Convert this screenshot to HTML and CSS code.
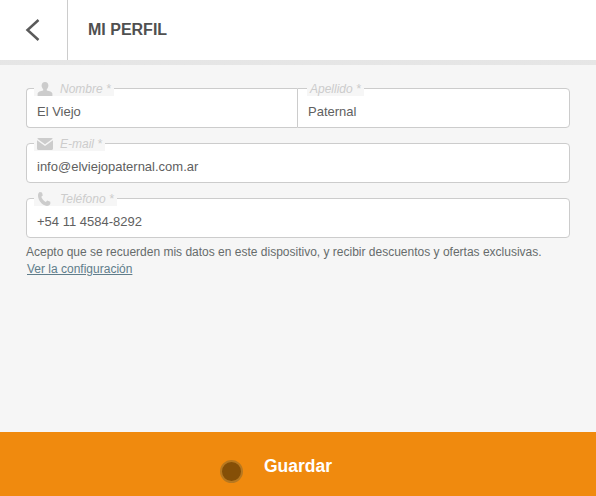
FILE: index.html
```html
<!DOCTYPE html>
<html lang="es">
<head>
<meta charset="utf-8">
<title>Mi perfil</title>
<link rel="stylesheet" href="styles.css">
</head>
<body>
<div class="app">
  <header class="topbar">
    <button class="back" aria-label="Volver">
      <svg width="16" height="22" viewBox="0 0 16 22"><path d="M13.500 1 2.500 11l11 10" fill="none" stroke="#5a5a5a" stroke-width="2.500"/></svg>
    </button>
    <h1 class="title">MI PERFIL</h1>
  </header>
  <main class="content">
    <div class="field-row">
      <div class="field field-first">
        <div class="label label-icon">
          <svg class="icon" width="16" height="14" viewBox="0 0 16 14"><path fill="#ccc" d="M8 0c2.200 0 3.400 1.600 3.400 3.600 0 1.500-.7 2.900-1.600 3.700v1.200c2.600.6 5.400 1.400 5.600 3V14H.6v-2.500c.2-1.600 3-2.400 5.600-3V7.300C5.300 6.500 4.600 5.100 4.600 3.600 4.600 1.600 5.800 0 8 0z"/></svg>
          <span>Nombre *</span>
        </div>
        <div class="value">El Viejo</div>
      </div>
      <div class="field field-last">
        <div class="label"><span>Apellido *</span></div>
        <div class="value">Paternal</div>
      </div>
    </div>
    <div class="field">
      <div class="label label-icon">
        <svg class="icon" width="16" height="12" viewBox="0 0 16 12"><path fill="#ccc" d="M1.500 0h13c.6 0 1 .3 1.200.7L8 6.300.3.700C.5.300.9 0 1.500 0zM0 2.300l8 5.800 8-5.800V10.500c0 .9-.6 1.500-1.500 1.500h-13C.6 12 0 11.400 0 10.500z"/></svg>
        <span>E-mail *</span>
      </div>
      <div class="value">info@elviejopaternal.com.ar</div>
    </div>
    <div class="field">
      <div class="label label-icon">
        <svg class="icon" width="16" height="14" viewBox="0 0 16 14"><path fill="#ccc" d="M2.800 0 5 .4l.8 3.200-1.500 1.200c.7 2.300 2.200 4 4.500 5.100l1.400-1.300 3.100 1.200v2.200c-.7 1.200-1.900 1.900-3.300 1.900C5 13.300 1 8.500 1 3.200 1 1.800 1.700.6 2.800 0z"/></svg>
        <span>Teléfono *</span>
      </div>
      <div class="value">+54 11 4584-8292</div>
    </div>
    <p class="consent">Acepto que se recuerden mis datos en este dispositivo, y recibir descuentos y ofertas exclusivas.</p>
    <a class="config" href="#">Ver la configuración</a>
  </main>
  <footer class="save">
    <span class="spinner"></span>
    <span class="save-text">Guardar</span>
  </footer>
</div>
</body>
</html>
```

FILE: styles.css
```css
* { box-sizing: border-box; }
html, body { margin: 0; height: 100%; }
body { font-family: "Liberation Sans", Arial, sans-serif; color: #555; background: #f6f6f6; }
.app { width: 596px; height: 496px; display: flex; flex-direction: column; overflow: hidden; }
.topbar { height: 65px; flex: none; display: flex; background: #fff; border-bottom: 5px solid; border-image: linear-gradient(#cfcfcf, #e6e6e6) 1; }
.back { width: 68px; height: 60px; padding: 0 2px 0 0; border: 0; border-right: 1px solid #ccc; background: none; display: flex; align-items: center; justify-content: center; }
.title { margin: 0 0 0 20px; font-size: 16px; line-height: 60px; font-weight: 700; color: #505050; }
.content { flex: 1; padding: 23px 26px 0; display: flex; flex-direction: column; }
.field-row { display: flex; }
.field { position: relative; height: 40px; background: #fff; border: 1px solid #ccc; border-radius: 4px; margin-bottom: 15px; padding: 0 10px; }
.field-first { width: 271px; border-right: 0; border-radius: 4px 0 0 4px; }
.field-last { flex: 1; border-radius: 0 4px 4px 0; }
.label { position: absolute; top: -8px; left: 9px; height: 15px; padding: 0 3px; display: flex; align-items: center; background: #f6f6f6; font-size: 12px; font-style: italic; color: #ccc; }
.label-icon { left: 7px; }
.icon { flex: none; margin: 0 7px 0 0; }
.value { font-size: 13px; line-height: 17px; margin-top: 14px; color: #606060; }
.consent { margin: 0; font-size: 12px; line-height: 14px; color: #666c6c; margin-top: -8px; }
.config { margin: 3px 0 0 1px; align-self: flex-start; font-size: 12px; line-height: 15px; color: #607d8b; }
.save { height: 64px; flex: none; position: relative; background: #f08a0e; display: flex; align-items: center; padding: 4px 0 0 264px; }
.save-text { font-size: 17.500px; font-weight: 700; color: #fff; }
.spinner { position: absolute; left: 220px; top: 28px; width: 23px; height: 23px; border-radius: 50%; background: #854f07; border: 2px solid #b8781f; }
```
